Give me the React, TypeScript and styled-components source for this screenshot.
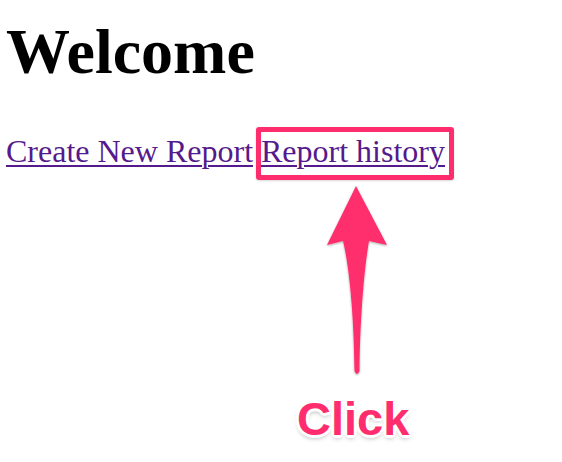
import React from "react";
import styled, { createGlobalStyle } from "styled-components";

const GlobalStyle = createGlobalStyle`
  html, body { margin: 0; padding: 0; background: #ffffff; }
  body { font-family: "Liberation Serif", "Times New Roman", serif; }
`;

const PINK = "#ff2d6d";

const Page = styled.div`
  position: relative;
  width: 562px;
  height: 462px;
  padding: 20px 0 0 6px;
  box-sizing: border-box;
  overflow: hidden;
`;

const Title = styled.h1`
  margin: 0;
  font-family: "Liberation Serif", "Times New Roman", serif;
  font-weight: bold;
  font-size: 64px;
  line-height: 64px;
  color: #000;
`;

const Links = styled.p`
  margin: 51px 0 0;
  font-size: 32px;
  line-height: 32px;
`;

const Link = styled.a`
  color: #551a8b;
  text-decoration: underline;
  text-decoration-thickness: 2px;
  text-underline-offset: 3px;
`;

const Highlight = styled.div`
  position: absolute;
  left: 256px;
  top: 127px;
  width: 198px;
  height: 53px;
  box-sizing: border-box;
  border: 5px solid ${PINK};
  border-radius: 3px;
  box-shadow: 0 1px 2px rgba(0, 0, 0, 0.15);
`;

const Arrow = styled.svg`
  position: absolute;
  left: 0;
  top: 0;
  overflow: visible;
`;

const ClickLabel = styled.div`
  position: absolute;
  left: 297px;
  top: 392px;
  font-family: "Liberation Sans", Arial, sans-serif;
  font-weight: bold;
  font-size: 47px;
  line-height: 53px;
  color: ${PINK};
  text-shadow:
    -3px 0 0 #fff, 3px 0 0 #fff, 0 -3px 0 #fff, 0 3px 0 #fff,
    -2px -2px 0 #fff, 2px -2px 0 #fff, -2px 2px 0 #fff, 2px 2px 0 #fff,
    0 3px 5px rgba(0, 0, 0, 0.35);
`;

export default function App() {
  return (
    <>
      <GlobalStyle />
      <Page>
        <Title>Welcome</Title>
        <Links>
          <Link href="#create">Create New Report</Link>{" "}
          <Link href="#history">Report history</Link>
        </Links>
        <Highlight />
        <Arrow width="562" height="462" viewBox="0 0 562 462">
          <defs>
            <filter id="sh" x="-20%" y="-20%" width="140%" height="140%">
              <feDropShadow dx="0" dy="1" stdDeviation="1.2" floodColor="#000" floodOpacity="0.35" />
            </filter>
          </defs>
          <path
            d="M356,186 L387,245 L369,241 C364,270 360,320 359.5,371 Q357,377 354.5,371 C354,320 350,270 343,241 L327,245 Z"
            fill={PINK}
            filter="url(#sh)"
          />
        </Arrow>
        <ClickLabel>Click</ClickLabel>
      </Page>
    </>
  );
}
